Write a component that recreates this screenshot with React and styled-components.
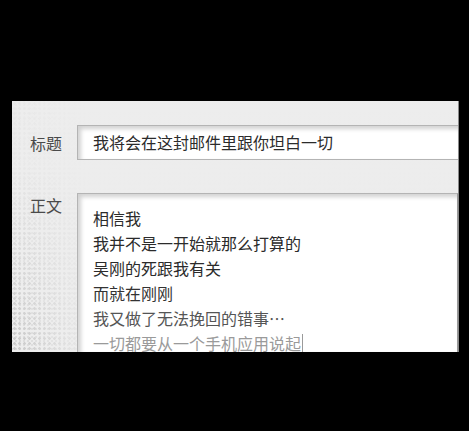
import React from "react";
import styled, { createGlobalStyle } from "styled-components";

const bodyLines = [
  { text: "相信我", tone: "#2b2b2b" },
  { text: "我并不是一开始就那么打算的", tone: "#2b2b2b" },
  { text: "吴刚的死跟我有关", tone: "#2b2b2b" },
  { text: "而就在刚刚", tone: "#333" },
  { text: "我又做了无法挽回的错事…", tone: "#555" },
  { text: "一切都要从一个手机应用说起", tone: "#9a9a9a", caret: true },
];

const App = () => {
  return (
    <>
      <GlobalStyle />
      <Screen>
        <Panel>
          <Row>
            <Label>标题</Label>
            <TitleField>我将会在这封邮件里跟你坦白一切</TitleField>
          </Row>
          <Row $grow>
            <Label>正文</Label>
            <BodyField>
              {bodyLines.map((line) => (
                <Line key={line.text} $tone={line.tone}>
                  {line.text}
                  {line.caret && <Caret />}
                </Line>
              ))}
            </BodyField>
          </Row>
        </Panel>
      </Screen>
    </>
  );
};

export default App;

const GlobalStyle = createGlobalStyle`
  html, body {
    margin: 0;
    padding: 0;
    background: #000;
  }
  body {
    font-family: "Noto Sans CJK SC", "Noto Sans", sans-serif;
  }
`;

const Screen = styled.div`
  width: 469px;
  height: 431px;
  padding: 101px 10px 0 12px;
  box-sizing: border-box;
  background: #000;
`;

const Panel = styled.div`
  width: 447px;
  height: 251px;
  box-sizing: border-box;
  padding-top: 24px;
  display: flex;
  flex-direction: column;
  gap: 33px;
  overflow: hidden;
  border-right: 1px solid #8a8a8a;
  background-color: #ededed;
  background-image:
    linear-gradient(to right, rgba(237, 237, 237, 0) 0%, rgba(237, 237, 237, 0.9) 17%),
    linear-gradient(to bottom, rgba(237, 237, 237, 0.85) 25%, rgba(237, 237, 237, 0) 95%),
    radial-gradient(circle, #c9c9c9 1.2px, transparent 1.5px),
    radial-gradient(circle, #dadada 0.8px, transparent 1.1px);
  background-size: 100% 100%, 100% 100%, 5px 5px, 4px 4px;
  background-position: 0 0, 0 0, 0 0, 2px 2px;
`;

const Row = styled.div`
  display: flex;
  align-items: ${(p) => (p.$grow ? "flex-start" : "center")};
  flex: ${(p) => (p.$grow ? "1" : "none")};
  min-height: 0;
`;

const Label = styled.div`
  width: 65px;
  box-sizing: border-box;
  padding-right: 15px;
  text-align: right;
  font-size: 16px;
  line-height: 24px;
  color: #4a4a4a;
  flex: none;
`;

const Field = styled.div`
  flex: 1;
  box-sizing: border-box;
  background: #fff;
  border: 1px solid #b4b4b4;
  border-right: none;
  box-shadow: inset 3px 3px 4px rgba(0, 0, 0, 0.18);
  font-size: 16px;
  color: #2b2b2b;
`;

const TitleField = styled(Field)`
  height: 35px;
  padding-left: 15px;
  line-height: 33px;
  white-space: nowrap;
`;

const BodyField = styled(Field)`
  align-self: stretch;
  padding: 12px 0 0 15px;
  border-bottom: none;
  border-right: 1px solid #9a9a9a;
`;

const Line = styled.div`
  line-height: 25px;
  height: 25px;
  color: ${(p) => p.$tone};
  white-space: nowrap;
  display: flex;
  align-items: center;
`;

const Caret = styled.span`
  display: inline-block;
  width: 1px;
  height: 19px;
  margin-left: 1px;
  background: #9a9a9a;
`;
